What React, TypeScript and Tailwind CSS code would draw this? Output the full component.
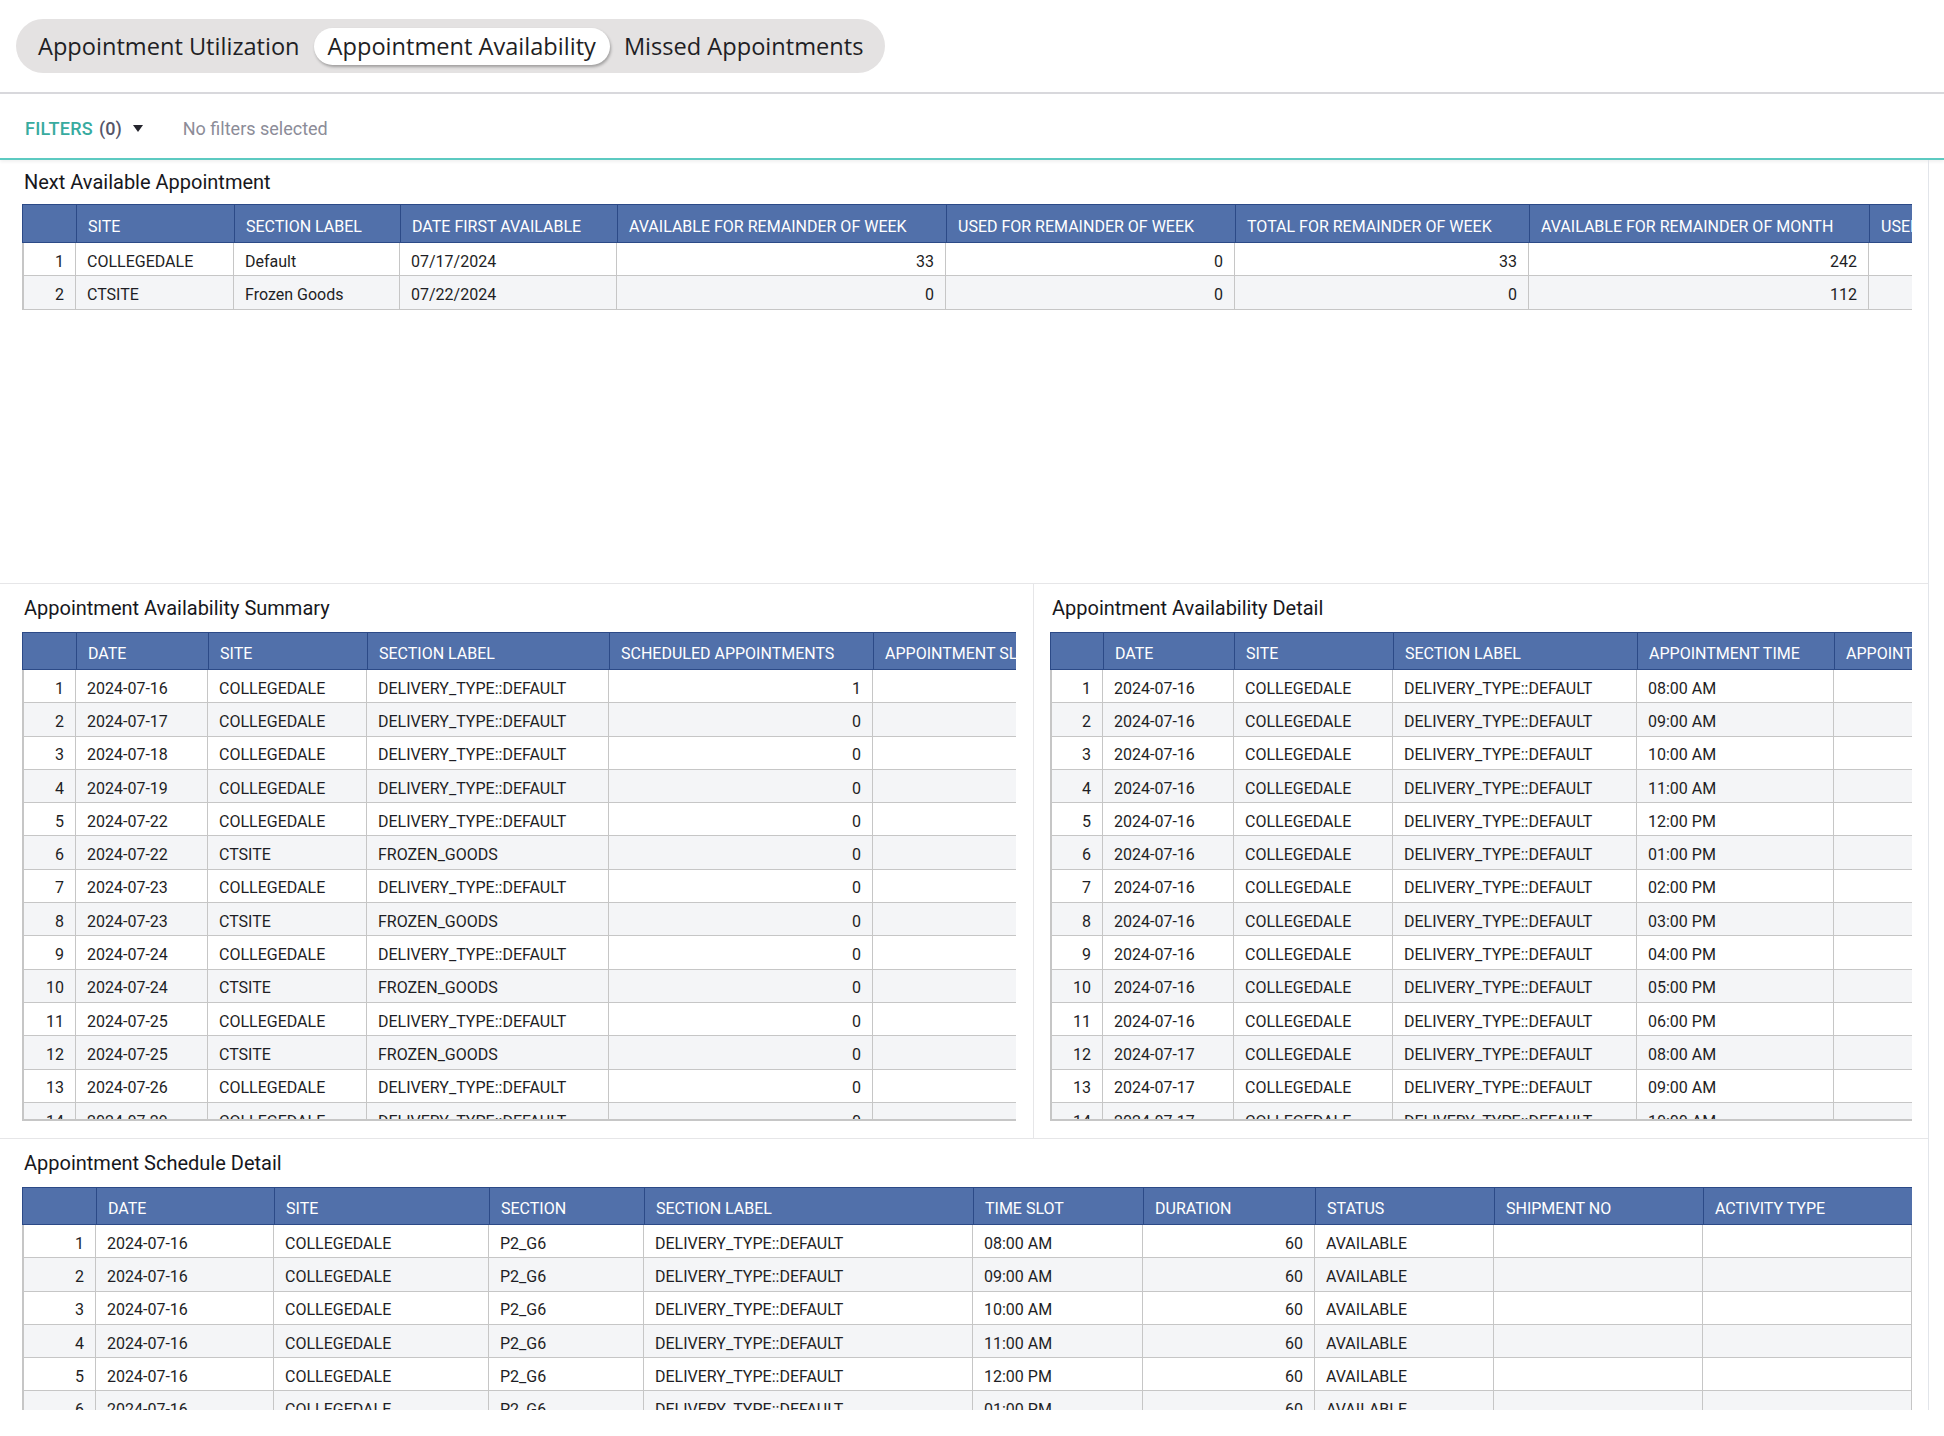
import React from "react";

type Col = { label: string; w: number; align?: "right" };

const DEF = "DELIVERY_TYPE::DEFAULT";

const FONT = { fontFamily: "Roboto, 'Liberation Sans', sans-serif" };

const DataTable = ({
  cols,
  rows,
  width,
  height,
  headerH = 38,
  clipLine = false,
}: {
  cols: Col[];
  rows: string[][];
  width: number;
  height?: number;
  headerH?: number;
  clipLine?: boolean;
}) => {
  return (
    <div className="overflow-hidden shrink-0" style={{ width, height }}>
      <div
        className="flex bg-[#5170aa] border-y border-l border-[#2c4a87] text-white text-[16px] uppercase"
        style={{ height: headerH }}
      >
        {cols.map((c, i) => (
          <div
            key={i}
            className="shrink-0 flex items-center pt-[6px] px-[11px] border-r border-[#2c4a87] whitespace-nowrap overflow-hidden"
            style={{ width: c.w }}
          >
            {c.label}
          </div>
        ))}
      </div>
      <div
        className={
          "overflow-hidden border-l-2 border-[#c6c6c6] " +
          (clipLine ? "border-b-2" : "")
        }
        style={height ? { height: height - headerH } : undefined}
      >
        {rows.map((r, ri) => (
          <div
            key={ri}
            className={
              "flex h-[33.3px] border-b border-[#c6c6c6] text-[16px] text-[#1e1e24] " +
              (ri % 2 === 1 ? "bg-[#f4f5f7]" : "bg-white")
            }
          >
            {cols.map((c, ci) => (
              <div
                key={ci}
                className={
                  "shrink-0 flex items-center pt-[5px] px-[11px] border-r border-[#c6c6c6] whitespace-nowrap overflow-hidden " +
                  (c.align === "right" || ci === 0 ? "justify-end" : "")
                }
                style={{ width: c.w - (ci === 0 ? 2 : 0) }}
              >
                {r[ci] ?? ""}
              </div>
            ))}
          </div>
        ))}
      </div>
    </div>
  );
};

const Title = ({ children }: { children: React.ReactNode }) => (
  <div className="h-[24px] leading-[24px] text-[20px] text-[#17171c] pl-[2px]">{children}</div>
);

const summaryRows: string[][] = [
  ["1", "2024-07-16", "COLLEGEDALE", DEF, "1"],
  ["2", "2024-07-17", "COLLEGEDALE", DEF, "0"],
  ["3", "2024-07-18", "COLLEGEDALE", DEF, "0"],
  ["4", "2024-07-19", "COLLEGEDALE", DEF, "0"],
  ["5", "2024-07-22", "COLLEGEDALE", DEF, "0"],
  ["6", "2024-07-22", "CTSITE", "FROZEN_GOODS", "0"],
  ["7", "2024-07-23", "COLLEGEDALE", DEF, "0"],
  ["8", "2024-07-23", "CTSITE", "FROZEN_GOODS", "0"],
  ["9", "2024-07-24", "COLLEGEDALE", DEF, "0"],
  ["10", "2024-07-24", "CTSITE", "FROZEN_GOODS", "0"],
  ["11", "2024-07-25", "COLLEGEDALE", DEF, "0"],
  ["12", "2024-07-25", "CTSITE", "FROZEN_GOODS", "0"],
  ["13", "2024-07-26", "COLLEGEDALE", DEF, "0"],
  ["14", "2024-07-29", "COLLEGEDALE", DEF, "0"],
];

const times = [
  "08:00 AM",
  "09:00 AM",
  "10:00 AM",
  "11:00 AM",
  "12:00 PM",
  "01:00 PM",
  "02:00 PM",
  "03:00 PM",
  "04:00 PM",
  "05:00 PM",
  "06:00 PM",
];

const detailRows: string[][] = [
  ...times.map((t, i) => [String(i + 1), "2024-07-16", "COLLEGEDALE", DEF, t]),
  ["12", "2024-07-17", "COLLEGEDALE", DEF, "08:00 AM"],
  ["13", "2024-07-17", "COLLEGEDALE", DEF, "09:00 AM"],
  ["14", "2024-07-17", "COLLEGEDALE", DEF, "10:00 AM"],
];

const scheduleRows: string[][] = times
  .slice(0, 6)
  .map((t, i) => [String(i + 1), "2024-07-16", "COLLEGEDALE", "P2_G6", DEF, t, "60", "AVAILABLE"]);

export default function App() {
  return (
    <div className="w-[1944px] h-[1436px] bg-white overflow-hidden" style={FONT}>
      {/* Tabs */}
      <div className="h-[94px] border-b-2 border-[#d8d8dc] pt-[19px] pl-[16px]">
        <div
          className="inline-flex items-center h-[54px] px-[8px] rounded-full bg-[#e4e2e2] text-[23.6px] font-medium text-[#1f1f25]"
          style={{ fontFamily: "'Open Sans', 'Noto Sans', sans-serif" }}
        >
          <div className="h-[37px] flex items-center pt-[1px] px-[14px]">Appointment Utilization</div>
          <div className="h-[37px] flex items-center pt-[1px] px-[14px] rounded-full bg-white shadow-[1px_2px_3px_rgba(0,0,0,0.3)]">
            Appointment Availability
          </div>
          <div className="h-[37px] flex items-center pt-[1px] px-[14px]">Missed Appointments</div>
        </div>
      </div>

      {/* Filters */}
      <div className="h-[66px] border-b-2 border-[#5ccac1] shadow-[0_2px_3px_rgba(0,0,0,0.06)] pt-[4px] pl-[25px] flex items-center text-[18px]">
        <span className="text-[#38ab9f] font-medium tracking-[0.3px]">FILTERS</span>
        <span className="text-[#56566a] font-medium ml-[6px]">(0)</span>
        <svg className="ml-[11px]" width="10" height="7" viewBox="0 0 10 7">
          <path d="M0 0 L10 0 L5 7 Z" fill="#25252d" />
        </svg>
        <span className="ml-[40px] text-[#8c8c98]">No filters selected</span>
      </div>

      {/* Content */}
      <div className="w-[1929px] h-[1250px] border-r border-[#e2e5ea] overflow-hidden">
        <section className="h-[424px] border-b border-[#e6e6e8] pt-[10px] px-[22px]">
          <Title>Next Available Appointment</Title>
          <div className="mt-[10px]">
            <DataTable
              width={1890}
              headerH={39}
              cols={[
                { label: "", w: 54 },
                { label: "Site", w: 158 },
                { label: "Section Label", w: 166 },
                { label: "Date First Available", w: 217 },
                { label: "Available for remainder of week", w: 329, align: "right" },
                { label: "Used for remainder of week", w: 289, align: "right" },
                { label: "Total for remainder of week", w: 294, align: "right" },
                { label: "Available for remainder of month", w: 340, align: "right" },
                { label: "Used for remainder of month", w: 300, align: "right" },
              ]}
              rows={[
                ["1", "COLLEGEDALE", "Default", "07/17/2024", "33", "0", "33", "242", ""],
                ["2", "CTSITE", "Frozen Goods", "07/22/2024", "0", "0", "0", "112", ""],
              ]}
            />
          </div>
        </section>

        <section className="h-[555px] border-b border-[#e6e6e8] flex">
          <div className="w-[1034px] border-r border-[#e6e6e8] pt-[12px] pl-[22px]">
            <Title>Appointment Availability Summary</Title>
            <div className="mt-[12px]">
              <DataTable
                width={994}
                height={489}
                clipLine
                cols={[
                  { label: "", w: 54 },
                  { label: "Date", w: 132 },
                  { label: "Site", w: 159 },
                  { label: "Section Label", w: 242 },
                  { label: "Scheduled Appointments", w: 264, align: "right" },
                  { label: "Appointment Slots", w: 220, align: "right" },
                ]}
                rows={summaryRows}
              />
            </div>
          </div>
          <div className="flex-1 pt-[12px] pl-[16px]">
            <Title>Appointment Availability Detail</Title>
            <div className="mt-[12px]">
              <DataTable
                width={862}
                height={489}
                clipLine
                cols={[
                  { label: "", w: 53 },
                  { label: "Date", w: 131 },
                  { label: "Site", w: 159 },
                  { label: "Section Label", w: 244 },
                  { label: "Appointment Time", w: 197 },
                  { label: "Appointment Status", w: 220 },
                ]}
                rows={detailRows}
              />
            </div>
          </div>
        </section>

        <section className="h-[271px] pt-[12px] px-[22px] overflow-hidden">
          <Title>Appointment Schedule Detail</Title>
          <div className="mt-[12px]">
            <DataTable
              width={1890}
              height={223}
              cols={[
                { label: "", w: 74 },
                { label: "Date", w: 178 },
                { label: "Site", w: 215 },
                { label: "Section", w: 155 },
                { label: "Section Label", w: 329 },
                { label: "Time Slot", w: 170 },
                { label: "Duration", w: 172, align: "right" },
                { label: "Status", w: 179 },
                { label: "Shipment No", w: 209 },
                { label: "Activity Type", w: 209 },
              ]}
              rows={scheduleRows}
            />
          </div>
        </section>
      </div>
    </div>
  );
}
